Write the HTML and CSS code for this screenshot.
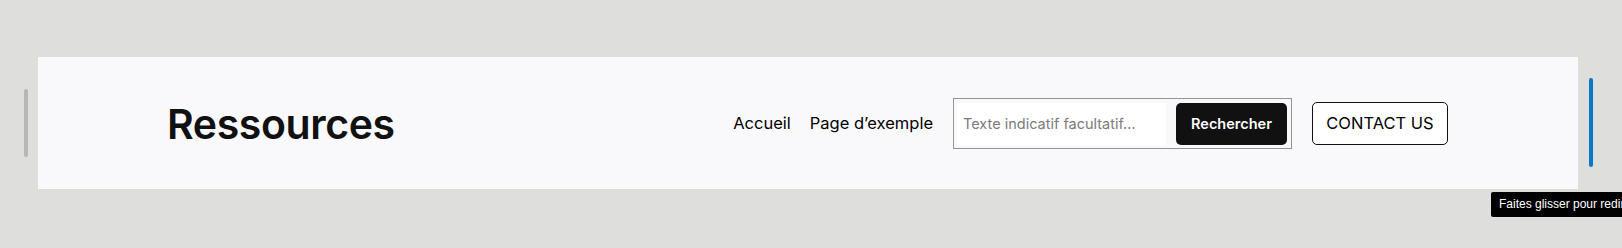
FILE: index.html
```html
<!DOCTYPE html>
<html lang="fr">
<head>
<meta charset="utf-8">
<title>Ressources</title>
<link rel="stylesheet" href="styles.css">
</head>
<body>
<div class="canvas">
  <div class="gutter-left"><div class="handle handle-gray"></div></div>
  <header class="panel">
    <h1 class="site-title">Ressources</h1>
    <div class="right">
      <nav class="nav">
        <a href="#" class="nav-link">Accueil</a>
        <a href="#" class="nav-link">Page d’exemple</a>
      </nav>
      <form class="search">
        <input class="search-input" type="text" placeholder="Texte indicatif facultatif…">
        <button class="search-btn" type="button">Rechercher</button>
      </form>
      <a href="#" class="contact">CONTACT US</a>
    </div>
  </header>
  <div class="gutter-right"><div class="handle handle-blue"></div></div>
</div>
<div class="tooltip">Faites glisser pour redimensionner</div>
</body>
</html>
```
FILE: styles.css
```css
html, body {
  margin: 0;
  padding: 0;
  background: #dededc;
  overflow: hidden;
  width: 1622px;
  height: 248px;
}
body {
  position: relative;
  font-family: Inter, "Noto Sans", sans-serif;
  color: #111;
}
.canvas {
  display: flex;
  align-items: flex-start;
  padding-top: 57px;
}
.gutter-left {
  width: 38px;
  flex: none;
  display: flex;
  padding-top: 32px;
}
.gutter-right {
  flex: 1;
  padding-top: 21px;
  padding-left: 11px;
}
.handle {
  width: 4px;
  border-radius: 2px;
}
.handle-gray {
  margin-left: 24px;
  height: 68px;
  background: #b6b6b4;
}
.handle-blue {
  height: 89px;
  background: #0a78c2;
}
.panel {
  width: 1540px;
  height: 132px;
  flex: none;
  box-sizing: border-box;
  background: #f9f9fb;
  display: flex;
  align-items: center;
  justify-content: space-between;
  padding: 0 130px 0 129px;
}
.site-title {
  margin: 0;
  font-size: 41px;
  font-weight: 600;
  letter-spacing: -0.4px;
  color: #111;
  line-height: 1;
  padding-top: 2px;
}
.right {
  display: flex;
  align-items: center;
  gap: 20px;
}
.nav {
  display: flex;
  gap: 19px;
}
.nav-link {
  color: #000;
  text-decoration: none;
  font-size: 16.5px;
  font-weight: 400;
}
.search {
  margin: 0;
  box-sizing: border-box;
  width: 339px;
  height: 51px;
  border: 1px solid #949494;
  display: flex;
  align-items: center;
  gap: 10px;
  padding: 4px 4px 3px 3px;
}
.search-input {
  flex: 1;
  min-width: 0;
  height: 42px;
  box-sizing: border-box;
  border: none;
  background: #ffffff;
  border-radius: 2px;
  padding: 0 6px;
  font-family: Inter, "Noto Sans", sans-serif;
  font-size: 14.5px;
  color: #111;
  outline: none;
}
.search-input::placeholder {
  color: #7b7b7b;
}
.search-btn {
  flex: none;
  width: 111px;
  height: 42px;
  border: none;
  border-radius: 5px;
  background: #111111;
  color: #ffffff;
  font-family: Inter, "Noto Sans", sans-serif;
  font-size: 14.5px;
  font-weight: 600;
  padding: 0;
}
.contact {
  box-sizing: border-box;
  width: 136px;
  height: 43px;
  border: 1px solid #111;
  border-radius: 5px;
  display: flex;
  align-items: center;
  justify-content: center;
  color: #000;
  text-decoration: none;
  font-size: 16.5px;
  background: #fff;
}
.tooltip {
  position: absolute;
  left: 1491px;
  top: 192px;
  height: 25px;
  box-sizing: border-box;
  padding: 0 8px;
  background: #000;
  color: #fff;
  border-radius: 2px;
  font-family: "Liberation Sans", Arial, sans-serif;
  font-size: 12px;
  line-height: 25px;
  white-space: nowrap;
}
```
